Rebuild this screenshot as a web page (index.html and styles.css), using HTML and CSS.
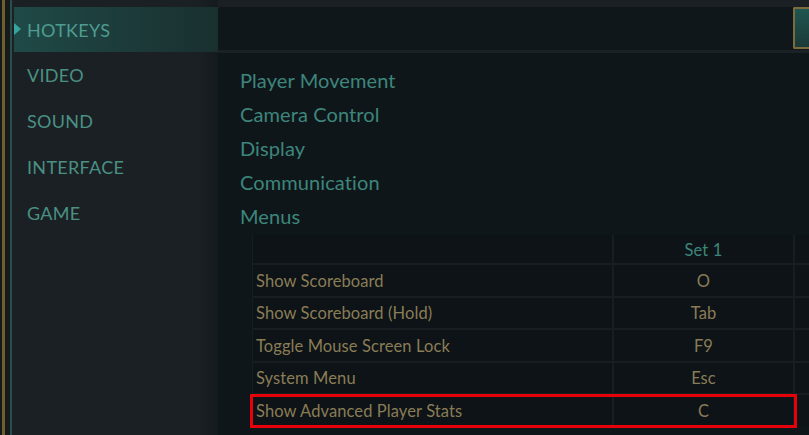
FILE: index.html
```html
<!DOCTYPE html>
<html>
<head>
<meta charset="utf-8">
<link rel="stylesheet" href="styles.css">
</head>
<body>
<div class="app">
  <div class="edge"><span class="edge-gold"></span><span class="edge-gap"></span><span class="edge-teal"></span></div>
  <nav class="sidebar">
    <div class="nav-item active"><span class="arrow"></span>HOTKEYS</div>
    <div class="nav-item">VIDEO</div>
    <div class="nav-item">SOUND</div>
    <div class="nav-item">INTERFACE</div>
    <div class="nav-item">GAME</div>
  </nav>
  <main class="main">
    <div class="topbar"><div class="corner-btn"></div></div>
    <div class="content">
      <ul class="cats">
        <li>Player Movement</li>
        <li>Camera Control</li>
        <li>Display</li>
        <li>Communication</li>
        <li>Menus</li>
      </ul>
      <div class="keys">
        <div class="row head"><div class="cell"></div><div class="cell key set">Set 1</div><div class="cell"></div></div>
        <div class="row"><div class="cell label">Show Scoreboard</div><div class="cell key">O</div><div class="cell"></div></div>
        <div class="row"><div class="cell label">Show Scoreboard (Hold)</div><div class="cell key">Tab</div><div class="cell"></div></div>
        <div class="row"><div class="cell label">Toggle Mouse Screen Lock</div><div class="cell key">F9</div><div class="cell"></div></div>
        <div class="row"><div class="cell label">System Menu</div><div class="cell key">Esc</div><div class="cell"></div></div>
        <div class="row marked"><div class="cell label">Show Advanced Player Stats</div><div class="cell key">C</div><div class="cell"></div><span class="mark"></span></div>
      </div>
    </div>
  </main>
</div>
</body>
</html>
```
FILE: styles.css
```css
* { box-sizing: border-box; }
html, body { margin: 0; padding: 0; }
body {
  width: 809px;
  height: 435px;
  overflow: hidden;
  background: #1a2023;
  font-family: Lato, "Open Sans", sans-serif;
}
.app {
  display: flex;
  height: 435px;
}
.edge {
  display: flex;
  width: 12px;
  flex: none;
  background: #141a1c;
}
.edge-gold { width: 3px; margin-left: 2px; background: #6f5f2c; }
.edge-gap { width: 5px; background: #151b1d; }
.edge-teal { width: 2px; background: #2a4f4a; }

.sidebar {
  width: 206px;
  flex: none;
  padding: 7px 0 0 2px;
  background: linear-gradient(to right, #1a2023 0%, #1a2023 90%, #141a1d 100%);
}
.nav-item {
  position: relative;
  height: 46px;
  padding-left: 13px;
  display: flex;
  align-items: center;
  color: #4a9084;
  font-size: 18px;
  letter-spacing: 0.3px;
}
.nav-item.active {
  height: 45px;
  background: linear-gradient(to right, #1f4a47 0%, #1c3b3a 55%, #19302f 100%);
  color: #4f9c91;
}
.arrow {
  position: absolute;
  left: 0;
  top: 16px;
  width: 0;
  height: 0;
  border-top: 6px solid transparent;
  border-bottom: 6px solid transparent;
  border-left: 7px solid #37a59d;
}

.main {
  flex: 1;
  min-width: 0;
  padding-top: 7px;
  background: #1a2023;
  display: flex;
  flex-direction: column;
}
.topbar {
  height: 46px;
  background: #10171a;
  border-bottom: 3px solid #1a2225;
  border-top-left-radius: 3px;
  display: flex;
  justify-content: flex-end;
  align-items: flex-start;
}
.corner-btn {
  width: 16px;
  height: 42px;
  border: 2px solid #7d6a3e;
  border-right: none;
  border-radius: 2px 0 0 2px;
  background: linear-gradient(to bottom, #1f5550, #1b3a38);
}
.content {
  flex: 1;
  background: #0f161a;
  padding: 11px 0 0 22px;
}
.cats {
  list-style: none;
  margin: 0;
  padding: 0;
}
.cats li {
  height: 34px;
  line-height: 33px;
  font-size: 20px;
  letter-spacing: 0.1px;
  color: #3d867c;
}
.keys {
  margin: 1px 0 0 12px;
  display: flex;
  flex-direction: column;
  gap: 2px;
  background: #161e21;
  padding: 0 0 0 1px;
}
.row {
  position: relative;
  display: grid;
  grid-template-columns: 359px 179px 1fr;
  gap: 2px;
  height: 30.5px;
}
.row.head { height: 28px; }
.cell {
  background: #0d1316;
  display: flex;
  align-items: center;
  padding-top: 1px;
  font-size: 16.5px;
  letter-spacing: 0.1px;
  color: #8a7d56;
}
.label { padding-left: 3px; }
.key { justify-content: center; }
.set { color: #3d867c; }
.mark {
  position: absolute;
  left: -3px;
  top: -1px;
  width: 547px;
  height: 34px;
  border: 3px solid #e8000a;
  pointer-events: none;
}
```
